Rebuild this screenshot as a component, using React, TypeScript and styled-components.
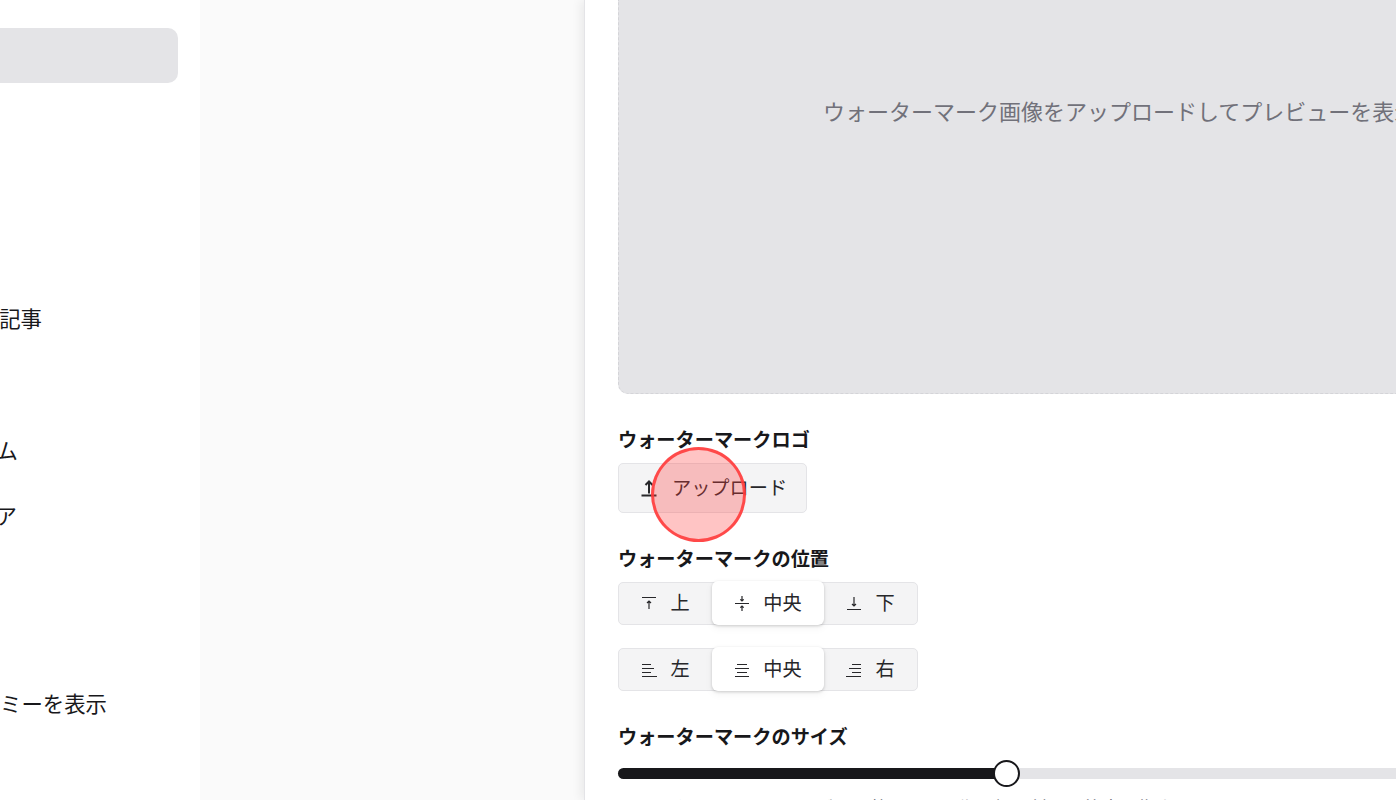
import React from "react";
import styled, { createGlobalStyle } from "styled-components";

const Global = createGlobalStyle`
  html, body { margin: 0; padding: 0; height: 100%; overflow: hidden; background: #fff; }
  * { box-sizing: border-box; }
  body { font-family: "Liberation Sans", "Noto Sans CJK JP", sans-serif; color: #18181b; }
`;

const Viewport = styled.div`
  width: 1396px;
  height: 800px;
  overflow: hidden;
  position: relative;
`;

const Page = styled.div`
  display: flex;
  width: 2000px;
  height: 800px;
  margin-left: -56px;
`;

const Sidebar = styled.nav`
  width: 256px;
  flex: none;
  background: #fff;
  padding: 28px 22px 0 22px;
  display: flex;
  flex-direction: column;
`;

const ActiveItem = styled.div`
  height: 55px;
  background: #e4e4e7;
  border-radius: 10px;
`;

const NavItem = styled.div<{ $top: number; $inset: number }>`
  margin-top: ${(p) => p.$top}px;
  height: 24px;
  line-height: 24px;
  font-size: 21.4px;
  white-space: nowrap;
  color: #18181b;
  text-align: right;
  padding-right: ${(p) => p.$inset}px;
`;

const Main = styled.main`
  flex: none;
  width: 1744px;
  background: #fafafa;
  padding-left: 384px;
`;

const Panel = styled.section`
  width: 1300px;
  height: 800px;
  background: #fff;
  border-left: 1px solid #e4e4e7;
  box-shadow: -3px 0 10px rgba(0, 0, 0, 0.07);
  padding-left: 33px;
`;

const Preview = styled.div`
  width: 1000px;
  height: 394px;
  background: #e4e4e7;
  border: 1px dashed #d4d4d8;
  border-top: 0;
  border-radius: 0 0 10px 10px;
  padding: 100px 0 0 204px;
  font-size: 22px;
  line-height: 26px;
  color: #71717a;
  white-space: nowrap;
`;

const Label = styled.div<{ $top: number }>`
  margin-top: ${(p) => p.$top}px;
  font-size: 19.2px;
  line-height: 22px;
  font-weight: 700;
  color: #18181b;
  white-space: nowrap;
`;

const UploadButton = styled.button`
  display: flex;
  align-items: center;
  gap: 15px;
  margin-top: 11px;
  width: 189px;
  height: 50px;
  padding: 0 0 0 22px;
  background: #f4f4f5;
  border: 1px solid #e4e4e7;
  border-radius: 5px;
  font: inherit;
  font-size: 19.2px;
  color: #27272a;
`;

const UploadCaption = styled.span`
  line-height: 22px;
  padding-top: 1px;
`;

const Segments = styled.div<{ $top: number }>`
  display: flex;
  width: 300px;
  height: 43px;
  margin-top: ${(p) => p.$top}px;
  background: #f4f4f5;
  border: 1px solid #e4e4e7;
  border-radius: 5px;
`;

const Segment = styled.div<{ $active?: boolean; $width: number }>`
  width: ${(p) => p.$width}px;
  flex: none;
  margin-top: -2px;
  height: 44px;
  display: flex;
  align-items: center;
  justify-content: center;
  gap: 13px;
  font-size: 19.2px;
  color: #27272a;
  background: ${(p) => (p.$active ? "#fff" : "transparent")};
  border-radius: 6px;
  box-shadow: ${(p) => (p.$active ? "0 1px 3px rgba(0,0,0,.18), 0 3px 8px rgba(0,0,0,.05)" : "none")};
`;

const SegmentCaption = styled.span`
  line-height: 22px;
  padding-top: 1px;
`;

const SliderTrack = styled.div`
  position: relative;
  margin-top: 19px;
  width: 1000px;
  height: 11px;
  border-radius: 6px;
  background: #e4e4e7;
`;

const SliderFill = styled.div`
  height: 100%;
  border-radius: 6px;
  background: #18181b;
`;

const SliderThumb = styled.div`
  position: absolute;
  top: -8px;
  width: 27px;
  height: 27px;
  border-radius: 50%;
  background: #fff;
  border: 2px solid #18181b;
`;

const Helper = styled.div`
  margin-top: 18px;
  font-size: 18px;
  line-height: 24px;
  color: #71717a;
  white-space: nowrap;
`;

const ClickMark = styled.div`
  position: absolute;
  left: 651px;
  top: 447px;
  width: 95px;
  height: 95px;
  border-radius: 50%;
  background: rgba(255, 60, 60, 0.3);
  border: 3px solid rgba(255, 60, 60, 0.9);
`;

const Icon = ({ d }: { d: string }) => (
  <svg width="16" height="16" viewBox="0 0 16 16" fill="none" stroke="#27272a" strokeWidth="1.2">
    <path d={d} />
  </svg>
);

const UploadIcon = () => (
  <svg width="16" height="18" viewBox="0 0 16 18" fill="none" stroke="#27272a" strokeWidth="2">
    <path d="M0.5 16.5h15M8 14.500V2.500M4.500 6 8 2.500 11.500 6" />
  </svg>
);

const icons = {
  top: "M1 2.500h14M8 14V6M6 8l2-2 2 2",
  middle: "M1 8.500h14M8 1v5M6.300 4.300 8 6l1.700-1.700M8 16v-5M6.300 12.700 8 11l1.700 1.700",
  bottom: "M1 14.500h14M8 2v9M6 9l2 2 2-2",
  left: "M1 3.500h9M1 7.500h12M1 11.500h9M1 15.500h15",
  center: "M3 3.500h10M1 7.500h14M3 11.500h10M1 15.500h14",
  right: "M6 3.500h9M3 7.500h12M6 11.500h9M0 15.500h15",
};

export default function App() {
  return (
    <Viewport>
      <Global />
      <Page>
        <Sidebar>
          <ActiveItem />
          <NavItem $top={225} $inset={136}>記事</NavItem>
          <NavItem $top={108} $inset={160}>ム</NavItem>
          <NavItem $top={41} $inset={161}>ア</NavItem>
          <NavItem $top={164} $inset={71}>ミーを表示</NavItem>
        </Sidebar>
        <Main>
          <Panel>
            <Preview>ウォーターマーク画像をアップロードしてプレビューを表示</Preview>
            <Label $top={36}>ウォーターマークロゴ</Label>
            <UploadButton>
              <UploadIcon />
              <UploadCaption>アップロード</UploadCaption>
            </UploadButton>
            <Label $top={36}>ウォーターマークの位置</Label>
            <Segments $top={11}>
              <Segment $width={93}><Icon d={icons.top} /><SegmentCaption>上</SegmentCaption></Segment>
              <Segment $width={112} $active><Icon d={icons.middle} /><SegmentCaption>中央</SegmentCaption></Segment>
              <Segment $width={93}><Icon d={icons.bottom} /><SegmentCaption>下</SegmentCaption></Segment>
            </Segments>
            <Segments $top={23}>
              <Segment $width={93}><Icon d={icons.left} /><SegmentCaption>左</SegmentCaption></Segment>
              <Segment $width={112} $active><Icon d={icons.center} /><SegmentCaption>中央</SegmentCaption></Segment>
              <Segment $width={93}><Icon d={icons.right} /><SegmentCaption>右</SegmentCaption></Segment>
            </Segments>
            <Label $top={36}>ウォーターマークのサイズ</Label>
            <SliderTrack>
              <SliderFill style={{ width: "39%" }} />
              <SliderThumb style={{ left: "375px" }} />
            </SliderTrack>
            <Helper>ウォーターマークのサイズを調整して、画像の幅に対する比率を指定します</Helper>
          </Panel>
        </Main>
      </Page>
      <ClickMark />
    </Viewport>
  );
}
